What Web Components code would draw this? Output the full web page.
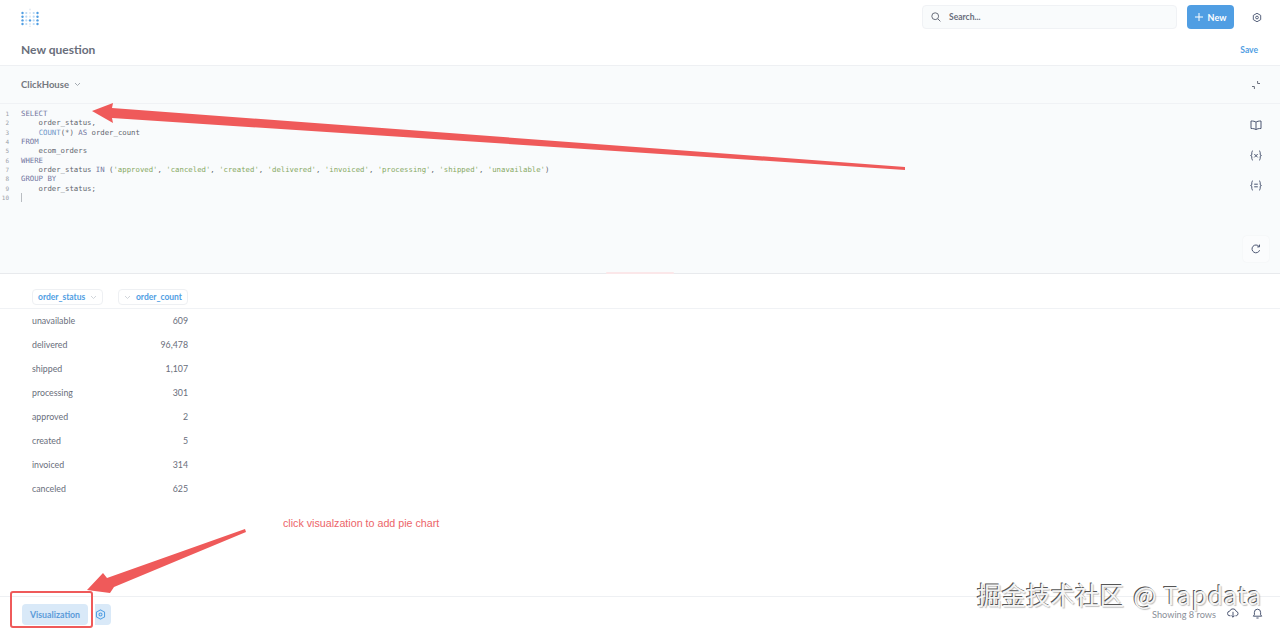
<!DOCTYPE html>
<html lang="en">
<head>
<meta charset="utf-8">
<title>New question</title>
<style>
html,body{margin:0;padding:0;background:#fff}
body{width:1280px;height:630px;overflow:hidden;font-family:Lato,"Noto Sans",sans-serif;position:relative}
</style>
</head>
<body>
<mb-page>
  <mb-nav></mb-nav>
  <mb-title></mb-title>
  <mb-editor></mb-editor>
  <mb-results></mb-results>
  <mb-footer></mb-footer>
</mb-page>
<mb-annotations></mb-annotations>
<script>
function def(name, html){
  customElements.define(name, class extends HTMLElement{
    constructor(){super();this.attachShadow({mode:'open'}).innerHTML=html;}
  });
}
const gear=(c,s)=>`<svg width="${s}" height="${s}" viewBox="0 0 16 16" fill="none" stroke="${c}" stroke-width="1.5" stroke-linejoin="round"><path d="M8 1.200l5.900 3.400v6.800L8 14.800l-5.900-3.400V4.600z"/><circle cx="8" cy="8" r="2.200"/></svg>`;
const cols=[1.5,5.3,9,12.7,16.5], ys=[6,9.7,13.4,17];
const logoDots=ys.map((y,r)=>cols.map((x,c)=>{
  const dark=(c===0||c===4||(c===2&&r===2));
  const fill=dark?'#509ee3':(c===2?'#dfe9f3':'#b9d8f4');
  return `<circle cx="${x}" cy="${y}" r="${dark?1.2:1.1}" fill="${fill}"/>`;
}).join('')).join('');
def('mb-page',`<style>:host{display:flex;flex-direction:column;width:1280px;height:630px}</style><slot></slot>`);
def('mb-nav',`<style>
:host{display:flex;align-items:center;height:34px;box-sizing:border-box;padding:0 18px 0 21px;flex:none}
.logo{display:block}
.sp{flex:1}
.search{width:255px;height:24px;box-sizing:border-box;background:#f9fbfc;border:1px solid #f0f2f5;border-radius:4px;display:flex;align-items:center;gap:8px;padding-left:8px;font:700 8.5px Lato,sans-serif;color:#696e7b}
.new{margin-left:10px;width:47px;height:24px;background:#509ee3;border-radius:4px;color:#fff;display:flex;align-items:center;justify-content:center;gap:5px;font:700 9px Lato,sans-serif}
.gear{margin-left:18px;display:flex;width:10px;justify-content:center}
</style>
<svg class="logo" width="18" height="20" viewBox="0 0 18 20">
${logoDots}
<circle cx="9" cy="2.500" r="1" fill="#e6edf4"/><circle cx="9" cy="19.500" r="1" fill="#e6edf4"/>
</svg>
<div class="sp"></div>
<div class="search"><svg width="10" height="10" viewBox="0 0 10 10" fill="none" stroke="#696e7b" stroke-width="1"><circle cx="4.200" cy="4.200" r="3.400"/><path d="M6.800 6.800l2.600 2.600"/></svg><span>Search...</span></div>
<div class="new"><svg width="8" height="8" viewBox="0 0 8 8" stroke="#fff" stroke-width="1"><path d="M4 0v8M0 4h8"/></svg><span>New</span></div>
<div class="gear">${gear('#4c5773',11)}</div>`);
def('mb-title',`<style>
:host{display:flex;align-items:center;justify-content:space-between;height:32px;box-sizing:border-box;padding:0 22px 0 21px;border-bottom:1px solid #eef0f3;flex:none}
.t{font:700 12px Lato,sans-serif;color:#696e7b}
.s{font:700 8.500px Lato,sans-serif;color:#509ee3;margin-top:1px}
</style><span class="t">New question</span><span class="s">Save</span>`);
def('mb-editor',`<style>
:host{display:block;flex:none;background:#f9fbfc}
.db{height:37px;display:flex;align-items:center;justify-content:space-between;padding:0 19px 0 21px;border-bottom:1px solid #f0f2f5;font:700 9.500px Lato,sans-serif;color:#74787f}
.db span{display:flex;align-items:center;gap:5px}
.main{height:170px;box-sizing:border-box;border-bottom:1px solid #e8eaed;display:flex;position:relative}
.code{flex:1;display:grid;grid-template-columns:9px 1fr;column-gap:12px;padding:5px 0 0 0;align-content:start;font:7.32px/9.33px "DejaVu Sans Mono",monospace;color:#5f656d}
.ln{color:#9aa0a8;text-align:right;font-size:6px}
.c{white-space:pre;height:9.33px}
.k{color:#72769f}.f{color:#6f97c9}.s{color:#86a862}
.cursor{display:inline-block;width:1px;height:9px;background:#b9bdc2;vertical-align:top}
.tools{width:49px;display:flex;flex-direction:column;align-items:center;padding-top:16px;box-sizing:border-box}
.tools svg{display:block}
.i{height:30px;width:12px;display:flex;justify-content:center}
.rf{position:absolute;right:11px;top:132px;width:26px;height:26px;background:#fbfcfd;border-radius:4px;display:flex;align-items:center;justify-content:center;box-shadow:0 0 2px rgba(0,0,0,.05)}
.handle{position:absolute;left:606px;bottom:-1px;width:68px;height:2px;background:#fbe7e9;border-radius:2px}
</style>
<div class="db"><span>ClickHouse<svg width="7" height="5" viewBox="0 0 7 5" fill="none" stroke="#9aa0a8" stroke-width=".9"><path d="M1 1l2.500 2.500L6 1"/></svg></span>
<svg width="10" height="10" viewBox="0 0 10 10" fill="none" stroke="#696e7b" stroke-width="1"><path d="M1 6.500h2.400V9M9 3.500H6.600V1"/></svg></div>
<div class="main">
<div class="code">
<span class="ln">1</span><span class="c"><span class="k">SELECT</span></span>
<span class="ln">2</span><span class="c">    order_status,</span>
<span class="ln">3</span><span class="c">    <span class="f">COUNT</span>(*) <span class="k">AS</span> order_count</span>
<span class="ln">4</span><span class="c"><span class="k">FROM</span></span>
<span class="ln">5</span><span class="c">    ecom_orders</span>
<span class="ln">6</span><span class="c"><span class="k">WHERE</span></span>
<span class="ln">7</span><span class="c">    order_status <span class="k">IN</span> (<span class="s">'approved'</span>, <span class="s">'canceled'</span>, <span class="s">'created'</span>, <span class="s">'delivered'</span>, <span class="s">'invoiced'</span>, <span class="s">'processing'</span>, <span class="s">'shipped'</span>, <span class="s">'unavailable'</span>)</span>
<span class="ln">8</span><span class="c"><span class="k">GROUP BY</span></span>
<span class="ln">9</span><span class="c">    order_status;</span>
<span class="ln">10</span><span class="c"><span class="cursor"></span></span>
</div>
<div class="tools">
<div class="i"><svg width="12" height="11" viewBox="0 0 12 11" fill="none" stroke="#4c5773" stroke-width="1"><path d="M6 2.200C5 1.300 3.200 1 1 1v7.500c2.200 0 4 .3 5 1.200 1-.9 2.800-1.200 5-1.200V1C8.800 1 7 1.300 6 2.200zM6 2.200v7.500"/></svg></div>
<div class="i"><svg width="12" height="11" viewBox="0 0 12 11" fill="none" stroke="#4c5773" stroke-width="1"><path d="M3 1C2 1 1.800 1.600 1.800 2.500v1.700C1.800 5 1.400 5.500.6 5.500c.8 0 1.200.5 1.200 1.300v1.700C1.800 9.400 2 10 3 10M9 1c1 0 1.200.6 1.200 1.500v1.700c0 .8.4 1.300 1.200 1.300-.8 0-1.200.5-1.200 1.300v1.700c0 .9-.2 1.500-1.200 1.500M4.300 4l3.400 3.400M7.700 4L4.300 7.400"/></svg></div>
<div class="i"><svg width="12" height="11" viewBox="0 0 12 11" fill="none" stroke="#4c5773" stroke-width="1"><path d="M3 1C2 1 1.800 1.600 1.800 2.500v1.700C1.800 5 1.400 5.500.6 5.500c.8 0 1.200.5 1.200 1.300v1.700C1.800 9.400 2 10 3 10M9 1c1 0 1.200.6 1.200 1.500v1.700c0 .8.4 1.300 1.200 1.300-.8 0-1.200.5-1.200 1.300v1.700c0 .9-.2 1.500-1.200 1.500M4.200 4.200h3.600M4.200 6.800h3.600"/></svg></div>
</div>
<div class="rf"><svg width="10" height="10" viewBox="0 0 10 10" fill="none" stroke="#4c5773" stroke-width="1"><path d="M8.600 6.200A3.900 3.900 0 1 1 8 2.500"/><path d="M8.500.6v2.300H6.200"/></svg></div>
<div class="handle"></div>
</div>`);
const rows=[['unavailable','609'],['delivered','96,478'],['shipped','1,107'],['processing','301'],['approved','2'],['created','5'],['invoiced','314'],['canceled','625']];
def('mb-results',`<style>
:host{display:block;flex:1;min-height:0;font-family:Lato,sans-serif}
.head{height:35px;box-sizing:border-box;border-bottom:1px solid #f0f2f5;display:flex;align-items:flex-start;padding:15px 0 0 32px}
.pill{height:16px;box-sizing:border-box;border:1px solid #eef0f3;border-radius:4px;display:flex;align-items:center;justify-content:space-between;padding:0 5px;font:700 8.500px Lato,sans-serif;color:#509ee3}
.a{width:71px;margin-right:15px}.b{width:70px}
.row{display:flex;justify-content:space-between;width:156px;margin-left:32px;height:24px;align-items:center;font:400 8.800px Lato,sans-serif;color:#696e7b}
.rows{margin-top:-1px}
</style>
<div class="head">
<div class="pill a">order_status<svg width="7" height="5" viewBox="0 0 7 5" fill="none" stroke="#c5cad0" stroke-width=".8"><path d="M1 1l2.500 2.500L6 1"/></svg></div>
<div class="pill b"><svg width="7" height="5" viewBox="0 0 7 5" fill="none" stroke="#c5cad0" stroke-width=".8"><path d="M1 1l2.500 2.500L6 1"/></svg>order_count</div>
</div>
<div class="rows">${rows.map(r=>`<div class="row"><span>${r[0]}</span><span>${r[1]}</span></div>`).join('')}</div>`);
def('mb-footer',`<style>
:host{display:flex;align-items:center;height:34px;box-sizing:border-box;border-top:1px solid #eef0f3;flex:none;padding:0 17px 0 22px}
.v{width:66px;height:21px;background:#d9e9f8;border-radius:4px;color:#5c9bd8;display:flex;align-items:center;justify-content:center;font:700 8.800px Lato,sans-serif;margin-top:2px}
.g{margin-left:7px;width:16px;height:21px;background:#d9e9f8;border-radius:0 4px 4px 0;display:flex;align-items:center;margin-top:2px}
.sp{flex:1}
.info{font:400 9.200px Lato,sans-serif;color:#8a8f99;margin-top:2px}
.ic{display:flex;margin-left:11px;margin-top:-1px}
.ic+.ic{margin-left:13px}
</style>
<div class="v">Visualization</div>
<div class="g">${gear('#509ee3',11)}</div>
<div class="sp"></div>
<span class="info">Showing 8 rows</span>
<span class="ic"><svg width="12" height="10" viewBox="0 0 12 10" fill="none" stroke="#4c5773" stroke-width="1"><path d="M3.500 7.800H3a2.300 2.300 0 0 1-.3-4.600A3.400 3.400 0 0 1 9.200 3.300a2.300 2.300 0 0 1 0 4.500H8.500M6 3.800v5.400M4.400 7.600L6 9.200l1.600-1.600"/></svg></span>
<span class="ic"><svg width="11" height="11" viewBox="0 0 11 11" fill="none" stroke="#4c5773" stroke-width="1"><path d="M1.300 8.200h8.400L8.600 6.800V4.300a3.100 3.100 0 0 0-6.200 0v2.500zM4.400 10h2.200"/></svg></span>`);
def('mb-annotations',`<style>
:host{position:absolute;left:0;top:0;width:1280px;height:630px;display:block;pointer-events:none}
svg{position:absolute;left:0;top:0}
.note{position:absolute;left:283px;top:517px;font:10.700px "Liberation Sans",Arial,sans-serif;color:#ec6469;white-space:nowrap}
.wm{position:absolute;left:977px;top:577px;font:24.500px "Noto Sans CJK SC","Noto Sans",sans-serif;line-height:36px;color:#f4f4f4;white-space:nowrap;text-shadow:-1px -1px 0 #555,1px 1px 1px rgba(0,0,0,.25)}
.wm span{letter-spacing:.8px;margin-left:3px}
</style>
<svg width="1280" height="630" viewBox="0 0 1280 630">
<polygon fill="#ef5a5a" points="92,111 113,103 112,108 905,167 905,170 112,118 113,123"/>
<polygon fill="#ef5a5a" points="87,590 103,573 107,578 245,529 246,532 114,587 110,593"/>
<rect x="11" y="592" width="81" height="35" rx="2" fill="none" stroke="#ef5a5a" stroke-width="2"/>
</svg>
<div class="note">click visualzation to add pie chart</div>
<div class="wm">掘金技术社区<span> @ Tapdata</span></div>`);
</script>
</body>
</html>
